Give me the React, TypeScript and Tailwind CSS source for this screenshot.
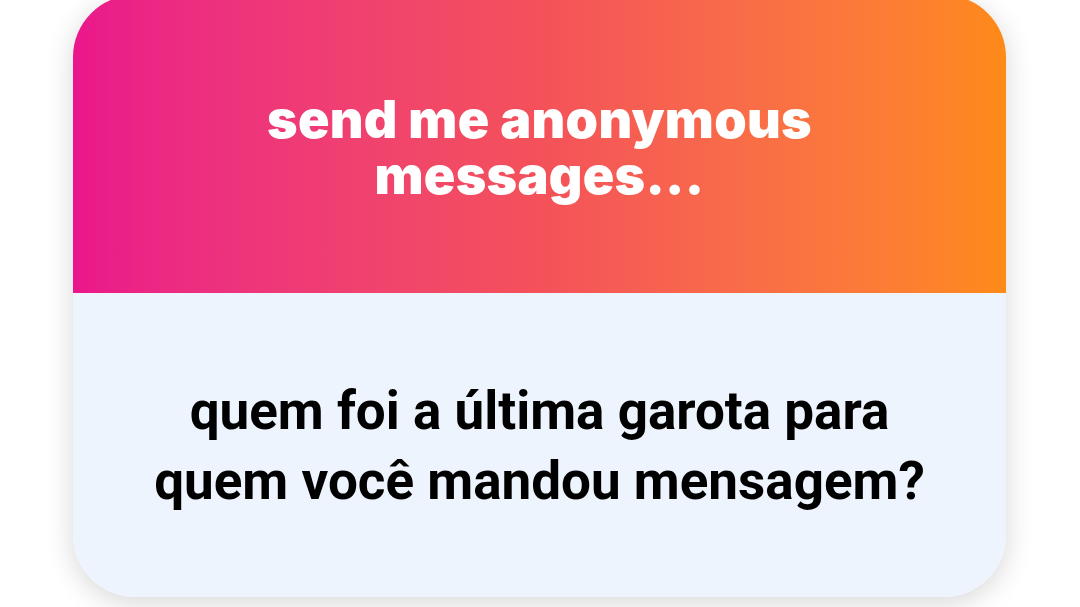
import React from 'react';

export default function App() {
  return (
    <div className="w-[1080px] h-[607px] bg-white overflow-hidden">
      <div className="ml-[73px] -mt-[5px] w-[933px] rounded-[62px] overflow-hidden shadow-[0_6px_28px_rgba(0,0,0,0.16)]">
        <div className="h-[298px] bg-gradient-to-r from-[#ea168b] via-[#f4515a] to-[#fe8a17] flex items-center justify-center pt-[8px]">
          <h1
            className="text-white text-center text-[52px] leading-[56px] font-black tracking-[0.3px]"
            style={{ fontFamily: 'Inter, "Noto Sans", sans-serif' }}
          >
            send me anonymous
            <br />
            messages...
          </h1>
        </div>
        <div className="h-[304px] bg-[#eef4fd] flex items-center justify-center pt-[2px]">
          <p
            className="text-black text-center text-[53px] leading-[70px] font-bold"
            style={{ fontFamily: 'Roboto, "Liberation Sans", sans-serif' }}
          >
            quem foi a última garota para
            <br />
            quem você mandou mensagem?
          </p>
        </div>
      </div>
    </div>
  );
}
